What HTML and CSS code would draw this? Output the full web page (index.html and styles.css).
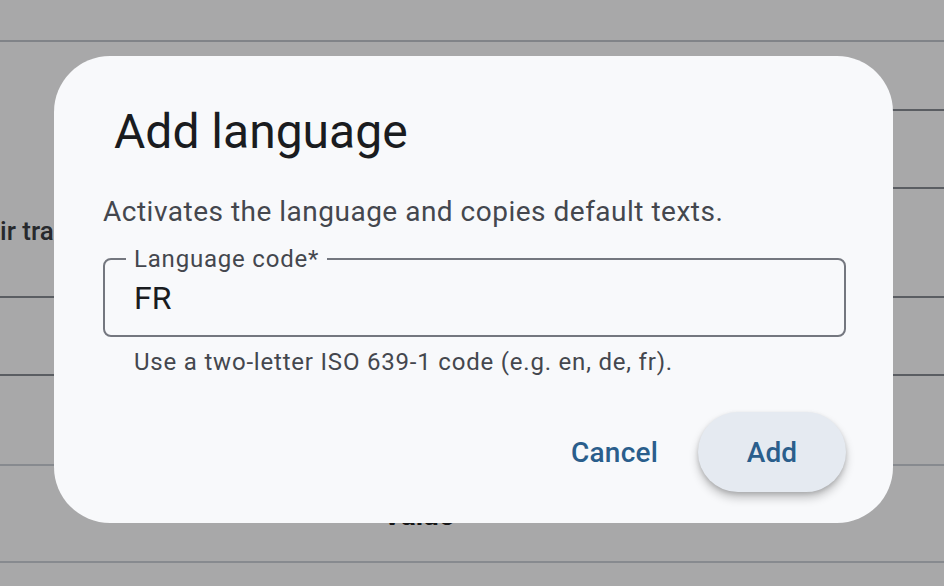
FILE: index.html
```html
<!DOCTYPE html>
<html lang="en">
<head>
    <meta charset="UTF-8">
    <title>Add language</title>
    <link rel="stylesheet" href="styles.css">
</head>
<body>
<div class="page">
    <div class="row row-top"></div>
    <div class="row row-main">
        <div class="cell-left">ir translations</div>
        <div class="cell-right">
            <div class="sub sub-a"></div>
            <div class="sub sub-b"></div>
        </div>
    </div>
    <div class="row row-c"></div>
    <div class="row row-d"></div>
    <div class="row row-e"><span class="head">Value</span></div>
</div>

<div class="dialog">
    <h2 class="dialog-title">Add language</h2>
    <p class="dialog-text">Activates the language and copies default texts.</p>
    <fieldset class="field">
        <legend>Language code*</legend>
        <div class="field-value">FR</div>
    </fieldset>
    <div class="hint">Use a two-letter ISO 639-1 code (e.g. en, de, fr).</div>
    <div class="actions">
        <button class="btn btn-text">Cancel</button>
        <button class="btn btn-tonal">Add</button>
    </div>
</div>
</body>
</html>
```

FILE: styles.css
```css
*{ margin: 0; padding: 0; box-sizing: border-box;}
body{ background: #a8a8a9; font-family: Roboto, "Noto Sans", Arial, sans-serif; overflow: hidden; height: 586px;}

/* page under the scrim */
.row{ border-bottom: 2px solid #5a5d62;}
.row-top{ height: 42px; border-bottom-color: #808388;}
.row-main{ height: 256px; display: flex; justify-content: space-between;}
.cell-left{ width: 54px; overflow: hidden; padding-top: 173px; font-size: 26px; line-height: 32px; font-weight: 500; color: #27292d; white-space: nowrap;}
.cell-right{ width: 340px;}
.sub{ border-bottom: 2px solid #5a5d62;}
.sub-a{ height: 69px;}
.sub-b{ height: 78px;}
.row-c{ height: 78px;}
.row-d{ height: 90px; border-bottom-color: #878a8f;}
.row-e{ height: 97px; border-bottom-color: #878a8f; padding: 30px 0 0 383px;}
.head{ font-size: 28px; line-height: 40px; font-weight: 700; color: #141516;}

/* dialog */
.dialog{ position: fixed; left: 54px; top: 56px; width: 839px; height: 467px; background: #f8f9fb;
    border-radius: 56px; padding: 44px 47px 0 49px;}
.dialog-title{ font-size: 48px; line-height: 64px; font-weight: 400; color: #1a1c1f; padding-left: 11px;}
.dialog-text{ margin-top: 28px; font-size: 28px; line-height: 40px; color: #44474e; letter-spacing: 0.5px;}
.field{ margin-top: 16px; border: 2px solid #74777f; border-radius: 8px; padding: 12px 8px 21px 29px;}
.field legend{ margin-left: -8px; padding: 0 8px; font-size: 24px; line-height: 22px; color: #44474e; letter-spacing: 0.8px;}
.field-value{ font-size: 32px; line-height: 32px; color: #1a1c1f;}
.hint{ margin-top: 9px; padding-left: 31px; font-size: 24px; line-height: 32px; color: #44474e; letter-spacing: 0.8px;}
.actions{ margin-top: 34px; display: flex; justify-content: flex-end; gap: 16px;}
.btn{ height: 80px; border: none; border-radius: 40px; font-family: inherit; font-size: 28px; font-weight: 500;
    color: #2a5e8c; background: none; padding: 0 24px; letter-spacing: 0.2px;}
.btn-tonal{ width: 148px; background: #e5eaf1; box-shadow: 0 6px 10px rgba(0,0,0,.22), 0 2px 4px rgba(0,0,0,.14);}
```
